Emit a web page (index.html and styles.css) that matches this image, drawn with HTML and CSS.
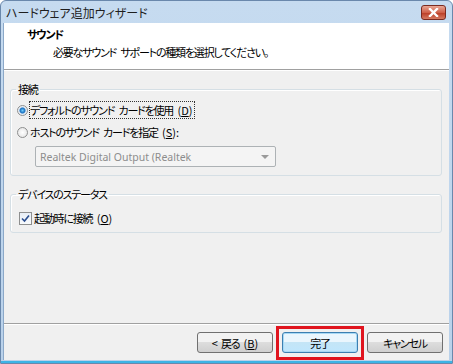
FILE: index.html
```html
<!DOCTYPE html>
<html lang="ja">
<head>
  <meta charset="UTF-8">
  <title>ハードウェア追加ウィザード</title>
  <link rel="stylesheet" href="styles.css">
</head>
<body>
<div class="window">
  <div class="titlebar">
    <span class="title">ハードウェア追加ウィザード</span>
    <span class="close">
      <svg width="13" height="9" viewBox="0 0 13 9"><path d="M3 1 L10 8 M10 1 L3 8" stroke="#fff" stroke-width="2.4" stroke-linecap="square"/></svg>
    </span>
  </div>
  <div class="client">
    <div class="header">
      <div class="head-title">サウンド</div>
      <div class="head-sub">必要なサウンド サポートの種類を選択してください。</div>
    </div>
    <div class="content">
      <fieldset class="group conn">
        <legend>接続</legend>
        <label class="opt focus"><span class="radio on"></span><span class="txt">デフォルトのサウンド カードを使用 <span class="key">(<u>D</u>)</span></span></label>
        <label class="opt"><span class="radio"></span><span class="txt">ホストのサウンド カードを指定 <span class="key">(<u>S</u>):</span></span></label>
        <div class="combo">
          <span>Realtek Digital Output (Realtek</span>
          <span class="arrow"></span>
        </div>
      </fieldset>
      <fieldset class="group status">
        <legend>デバイスのステータス</legend>
        <label class="opt check-row"><span class="check"><svg width="9" height="9" viewBox="0 0 9 9"><path d="M1 4.5 L3.5 7 L8 1.5" fill="none" stroke="#2a4d8f" stroke-width="1.6"/></svg></span><span class="txt">起動時に接続 <span class="key">(<u>O</u>)</span></span></label>
      </fieldset>
    </div>
    <div class="footer">
      <button class="btn">&lt; 戻る <span class="key">(<u>B</u>)</span></button>
      <span class="mark"><button class="btn primary">完了</button></span>
      <button class="btn">キャンセル</button>
    </div>
  </div>
</div>
</body>
</html>
```

FILE: styles.css
```css
body {
  margin: 0;
  font-family: "Noto Sans CJK JP", "DejaVu Sans", sans-serif;
  font-size: 11px;
  letter-spacing: -1.2px;
  word-spacing: 3px;
  font-feature-settings: "palt";
  color: #000;
}
.key { letter-spacing: 0; }
.window {
  width: 453px;
  height: 364px;
  box-sizing: border-box;
  background: linear-gradient(#c6dbf0, #b9d1ea);
  border: 1px solid #6a88ac;
  border-radius: 6px 6px 0 0;
  display: flex;
  flex-direction: column;
  padding: 0 3px 3px 2px;
  box-shadow: inset 0 -2px 0 #3cb4e6;
}
.titlebar {
  height: 22px;
  flex: none;
  display: flex;
  align-items: center;
  justify-content: space-between;
  padding-left: 3px;
}
.title { font-size: 12px; letter-spacing: 0; color: #1e1e1e; }
.close {
  width: 25px;
  height: 15px;
  box-sizing: border-box;
  margin-right: 3px;
  border: 1px solid #7a2a20;
  border-radius: 3px;
  background: linear-gradient(#e9a796, #cf6049 50%, #bb3f28 55%, #d67a62);
  display: flex;
  align-items: center;
  justify-content: center;
}
.client {
  flex: 1;
  background: #f0f0f0;
  display: flex;
  flex-direction: column;
  border-left: 1px solid #8ba8c8;
}
.header {
  background: #fff;
  height: 47px;
  flex: none;
  border-bottom: 1px solid #a0a0a0;
  padding: 2px 0 0 23px;
  box-sizing: border-box;
}
.head-title { font-weight: bold; line-height: 18px; }
.head-sub { padding-left: 26px; line-height: 18px; }
.content {
  flex: 1;
  padding: 0 7px 0 6px;
  border-top: 1px solid #fff;
}
.group {
  border: 1px solid #d5dfe5;
  border-radius: 3px;
  margin: 11px 0 0 0;
  box-shadow: inset 1px 1px 0 #fff;
}
.conn { padding: 3px 6px 8px 6px; }
.status { padding: 6px 6px 3px 6px; }
.group legend {
  padding: 0 2px;
  margin-left: -1px;
  line-height: 14px;
}
.opt {
  display: flex;
  align-items: center;
  height: 22px;
  gap: 2px;
}
.focus .txt { outline: 1px dotted #333; padding-right: 2px; }
.radio {
  width: 11px;
  height: 11px;
  border-radius: 50%;
  border: 1px solid #8e8f8f;
  background: radial-gradient(#fff, #e0e0e0);
  box-sizing: border-box;
  display: inline-block;
}
.radio.on { background: radial-gradient(#6ccaf9 0, #1a6fc0 2.5px, #dfeaf5 3.5px, #f4f4f4 5px); }
.combo {
  margin: 3px 0 0 18px;
  width: 241px;
  height: 21px;
  box-sizing: border-box;
  border: 1px solid #adb2b5;
  border-radius: 2px;
  background: #f4f4f4;
  color: #8d8d8d;
  font-family: "Noto Sans", sans-serif;
  font-size: 10.5px;
  letter-spacing: 0;
  word-spacing: 0;
  display: flex;
  align-items: center;
  justify-content: space-between;
  padding: 0 6px 0 4px;
}
.arrow {
  border-left: 4px solid transparent;
  border-right: 4px solid transparent;
  border-top: 4px solid #9a9a9a;
}
.check-row { margin-left: 2px; }
.check {
  width: 13px;
  height: 13px;
  border: 1px solid #8e8f8f;
  background: linear-gradient(#e8eef6, #f8fafc);
  box-sizing: border-box;
  display: flex;
  align-items: center;
  justify-content: center;
}
u { text-decoration: underline; }
.footer {
  height: 37px;
  flex: none;
  box-sizing: border-box;
  border-top: 1px solid #a0a0a0;
  box-shadow: inset 0 1px 0 #fff;
  display: flex;
  justify-content: flex-end;
  align-items: flex-start;
  gap: 9px;
  padding: 8px 6px 0 0;
}
.btn {
  width: 76px;
  height: 21px;
  border: 1px solid #707070;
  border-radius: 3px;
  background: linear-gradient(#f2f2f2 50%, #dddddd 50%, #cfcfcf);
  font-family: inherit;
  font-size: 11px;
  letter-spacing: -1.2px;
  word-spacing: 3px;
  font-feature-settings: "palt";
  padding: 0;
  color: #000;
}
.btn.primary {
  border-color: #3c7fb1;
  background: linear-gradient(#eaf6fd 50%, #c4e5f6 50%, #bee6fd);
  box-shadow: inset 0 0 0 1px #a7d9f5;
}
.mark {
  border: 3px solid #e0141e;
  padding: 3px 3px 4px 3px;
  margin: -6px -6px -7px -6px;
  display: flex;
}
```
